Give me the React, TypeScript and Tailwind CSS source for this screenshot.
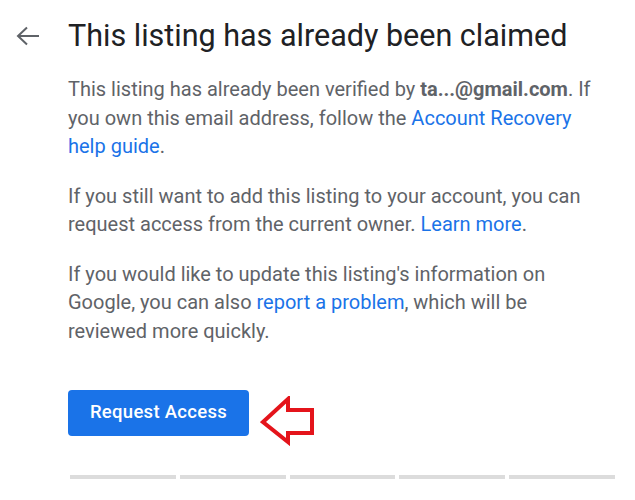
import React from "react";

const font = { fontFamily: "Roboto, 'Noto Sans', Arial, sans-serif" };

function Link({ children }: { children: React.ReactNode }) {
  return <span className="text-[#1a73e8]">{children}</span>;
}

export default function App() {
  return (
    <div className="w-[635px] h-[500px] bg-white overflow-hidden" style={font}>
      {/* Header */}
      <div className="flex items-center pt-[19px] pl-[16px]">
        <svg width="24" height="20" viewBox="0 0 24 20" className="shrink-0">
          <path
            d="M2 10 H23 M11 1.5 L2 10 L11 18.5"
            fill="none"
            stroke="#5f6368"
            strokeWidth="2"
          />
        </svg>
        <h1 className="ml-[28px] text-[30.5px] leading-[34px] text-[#202124]">
          This listing has already been claimed
        </h1>
      </div>

      {/* Body */}
      <div className="pl-[68px] pr-[44px] mt-[22px] text-[20px] leading-[28.5px] text-[#5f6368] space-y-[21px]">
        <p>
          This listing has already been verified by{" "}
          <span className="font-bold text-[#5f6368]">ta...@gmail.com</span>. If
          you own this email address, follow the{" "}
          <Link>Account Recovery help guide</Link>.
        </p>
        <p>
          If you still want to add this listing to your account, you can
          request access from the current owner. <Link>Learn more</Link>.
        </p>
        <p>
          If you would like to update this listing's information on Google, you
          can also <Link>report a problem</Link>, which will be reviewed more
          quickly.
        </p>
      </div>

      {/* Action */}
      <div className="flex items-start h-[46px] pl-[68px] mt-[45px]">
        <button
          type="button"
          className="h-[46px] w-[181px] rounded-[4px] bg-[#1a73e8] text-white text-[18.5px] font-medium tracking-[0.3px]"
        >
          Request Access
        </button>
        <svg width="56" height="50" viewBox="0 0 56 50" className="ml-[11px] mt-[6px] shrink-0">
          <path
            d="M3 26 L28 3 L28 14 L52 14 L52 37 L28 37 L28 46 Z"
            fill="none"
            stroke="#e4141b"
            strokeWidth="4"
            strokeLinejoin="miter"
          />
        </svg>
      </div>

      {/* Progress bars */}
      <div className="flex gap-[4px] pl-[70px] pr-[20px] mt-[39px]">
        <div className="flex-1 h-[4px] bg-[#dcdcdc]" />
        <div className="flex-1 h-[4px] bg-[#dcdcdc]" />
        <div className="flex-1 h-[4px] bg-[#dcdcdc]" />
        <div className="flex-1 h-[4px] bg-[#dcdcdc]" />
        <div className="flex-1 h-[4px] bg-[#dcdcdc]" />
      </div>
    </div>
  );
}
